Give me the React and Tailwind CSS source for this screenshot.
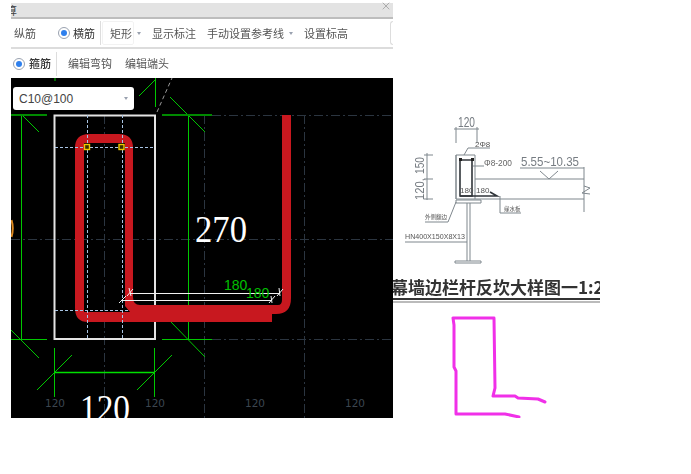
import { X } from 'lucide-react';

const cjk = { fontFamily: '"Noto Sans CJK SC", sans-serif' };

function Radio() {
  return (
    <span className="w-3 h-3 rounded-full border border-gray-400 bg-white flex items-center justify-center shrink-0">
      <span className="w-1.5 h-1.5 rounded-full bg-[#2f80ed]" />
    </span>
  );
}

function Caret() {
  return <span className="block w-0 h-0 border-x-[2px] border-x-transparent border-t-[3px] border-t-gray-400" />;
}

function Canvas() {
  const center = '#2b3540';
  const dash = '#a9c4e4';
  const green = '#00c800';
  return (
    <svg width="382" height="340" viewBox="11 78 382 340" className="block">
      <rect x="11" y="78" width="382" height="340" fill="#000" />

      {/* axis lines */}
      <g stroke={center} strokeWidth="1" strokeDasharray="9 3 2 3" fill="none">
        <path d="M11 239.5H393" />
        <path d="M212 115.5H393" />
        <path d="M212 339.5H393" />
        <path d="M104.5 115V418" />
        <path d="M204.5 115V418" />
        <path d="M304.5 115V418" />
      </g>

      {/* green dimension marks */}
      <g stroke={green} strokeWidth="1" fill="none">
        <path d="M21.5 115V339" />
        <path d="M188.5 115V339" />
        <path d="M22 115L39 132" />
        <path d="M170 97L205 132" />
        <path d="M155.5 78V107" />
        <path d="M139 96L155 80" />
        <path d="M55 78V81" />
        <path d="M11 330L39 358" />
        <path d="M170 321L205 357" />
        <path d="M11 339.5H47" />
        <path d="M162 339.5H212" />
        <path d="M54.5 348V397" />
        <path d="M154.5 348V397" />
        <path d="M54 372.5H155" strokeWidth="1.4" stroke="#00e000" />
        <path d="M37 390L72 355" />
        <path d="M137 390L172 355" />
      </g>
      <path d="M11 115H47M162 115H212" stroke="#008a00" strokeWidth="2" />
      <path d="M157 112L172 78" stroke="#999" strokeWidth="1" strokeDasharray="4 3" />

      {/* section outline */}
      <rect x="54.5" y="115.5" width="100.5" height="223.5" fill="none" stroke="#e4e4e4" strokeWidth="2" />

      {/* rebar */}
      <path
        fillRule="evenodd"
        fill="#c8181f"
        d="M282 115H291V298Q291 314 276 314H272V322H88Q75 322 75 308V148Q75 134 89 134H119Q133 134 133 148V297Q133 305 140 305H278Q282 305 282 300ZM84 143V312H130L125 306V143Z"
      />

      <g stroke={dash} strokeWidth="1" strokeDasharray="3 2" fill="none">
        <path d="M55 147.5H155" />
        <path d="M55 310.5H130" />
        <path d="M87.5 115V339" />
        <path d="M122.5 115V339" />
      </g>
      <rect x="84.5" y="144.5" width="5" height="5" fill="#3a3000" stroke="#f0c800" strokeWidth="1.4" />
      <rect x="119" y="144.5" width="5" height="5" fill="#3a3000" stroke="#f0c800" strokeWidth="1.4" />

      {/* 180 leaders */}
      <g stroke="#f2f2f2" strokeWidth="1" fill="none">
        <path d="M130 293.5H280" />
        <path d="M122 300.5H272" />
        <path d="M127 296L133 289M129 288L131 296" />
        <path d="M119 303L126 296" />
        <path d="M277 296L283 289M279 288L280 296" />
        <path d="M269 303L275 296M271 296L272 303" />
      </g>
      <text x="224" y="290" fill="#00c000" fontSize="14" style={{ fontFamily: '"Liberation Sans", sans-serif' }}>180</text>
      <text x="246" y="298" fill="#00c000" fontSize="14" style={{ fontFamily: '"Liberation Sans", sans-serif' }}>180</text>

      <text x="195" y="242" fill="#fff" fontSize="37" textLength="52" lengthAdjust="spacingAndGlyphs" style={{ fontFamily: '"Liberation Serif", serif' }}>270</text>
      <text x="80" y="421" fill="#fff" fontSize="37" textLength="50" lengthAdjust="spacingAndGlyphs" style={{ fontFamily: '"Liberation Serif", serif' }}>120</text>

      <g fill="#3c4650" fontSize="10.5" style={{ fontFamily: '"DejaVu Sans", sans-serif' }}>
        <text x="45" y="407">120</text>
        <text x="145" y="407">120</text>
        <text x="245" y="407">120</text>
        <text x="345" y="407">120</text>
      </g>

      <path d="M11.5 220Q14 228 11.5 237" stroke="#e08a20" strokeWidth="2" fill="none" />
    </svg>
  );
}

function Detail() {
  const line = '#7f878d';
  return (
    <svg width="207" height="170" viewBox="393 105 207 170" className="block blur-[0.4px]">
      <g stroke={line} strokeWidth="1" fill="none">
        <path d="M456 155H475V199" />
        <path d="M456 155V199" strokeWidth="1.5" />
        <path d="M475 179H584M456 199H584" />
        <path d="M584 167V212" />
        <path d="M584 186L590 188L582 193L590 194" />
        <path d="M456 127V143M477 127V143M454 129H479" />
        <path d="M427 153V200M424 155H433M424 179H433M424 199H433" />
        <path d="M540 171L549 179L558 171M520 168H584" />
        <path d="M500 196V213H521" />
        <path d="M464 155L468 148H490" />
        <path d="M473 166H484" />
        <path d="M456 200H481V203H456Z" />
        <path d="M455 261H481V263H455Z" />
        <path d="M467 203V261M470 203V261" />
        <path d="M456 202L448 222H425" />
        <path d="M405 242H467" />
      </g>
      <g stroke="#30353a" strokeWidth="1.6" fill="none">
        <path d="M460 160H472V196H460Z" />
        <path d="M460 196H497L490 192" />
      </g>
      <rect x="459" y="158" width="3" height="3" fill="#222" />
      <rect x="471" y="158" width="3" height="3" fill="#222" />
      <g fill="#777d83" style={{ fontFamily: '"Liberation Sans", sans-serif' }}>
        <text x="458" y="127" fontSize="14" textLength="17" lengthAdjust="spacingAndGlyphs">120</text>
        <text x="475" y="147" fontSize="8" fill="#555">2Φ8</text>
        <text x="484" y="166" fontSize="9" fill="#666" textLength="28" lengthAdjust="spacingAndGlyphs">Φ8-200</text>
        <text x="521" y="166" fontSize="13" textLength="58" lengthAdjust="spacingAndGlyphs">5.55~10.35</text>
        <text x="460" y="193" fontSize="8" fill="#555">180</text>
        <text x="476" y="193" fontSize="8" fill="#555">180</text>
        <text x="405" y="239" fontSize="8" fill="#555" textLength="60" lengthAdjust="spacingAndGlyphs">HN400X150X8X13</text>
        <text transform="translate(424 174) rotate(-90)" fontSize="13" textLength="17" lengthAdjust="spacingAndGlyphs">150</text>
        <text transform="translate(424 200) rotate(-90)" fontSize="13" textLength="22" lengthAdjust="spacingAndGlyphs">120,</text>
      </g>
      <g fill="#555" fontSize="5.5" style={cjk}>
        <text x="425" y="219">外侧翻边</text>
        <text x="504" y="211">缘水板</text>
      </g>
    </svg>
  );
}

export default function App() {
  return (
    <div className="w-[691px] h-[474px] bg-white flex items-start overflow-hidden" style={cjk}>
      <div className="ml-[11px] w-[382px] pt-[3px] shrink-0">
        <div className="h-[14px] bg-[#e3e3e3] flex items-start justify-between pr-[1px]">
          <span className="w-[6px] h-[14px] overflow-hidden flex items-center">
            <span className="text-[11px] leading-none text-[#444] -ml-[5px]">算</span>
          </span>
          <X className="w-3 h-3 -mt-[3px] text-[#999]" strokeWidth={1.5} />
        </div>
        <div className="h-[2px] bg-[#bdbdbd]" />

        <div className="h-[28px] flex items-center text-[11px] text-[#555] whitespace-nowrap blur-[0.25px]">
          <span className="ml-[3px]">纵筋</span>
          <span className="ml-[22px]"><Radio /></span>
          <span className="ml-[3px] text-[#333]">横筋</span>
          <span className="ml-[5px] w-px h-6 bg-[#ddd]" />
          <span className="ml-[1px] pl-[7px] pr-[1px] h-6 flex items-center border border-[#f2f2f2] rounded-[2px]">矩形</span>
          <span className="ml-[3px]"><Caret /></span>
          <span className="ml-[11px]">显示标注</span>
          <span className="ml-[11px]">手动设置参考线</span>
          <span className="ml-[5px]"><Caret /></span>
          <span className="ml-[11px]">设置标高</span>
          <span className="ml-auto w-[3px] h-6 border border-r-0 border-[#ddd] rounded-l-[3px]" />
        </div>
        <div className="h-[2px] bg-[#dcdcdc]" />

        <div className="h-[29px] flex items-center text-[11px] text-[#555] whitespace-nowrap blur-[0.25px]">
          <span className="ml-[2px]"><Radio /></span>
          <span className="ml-[4px] font-medium text-[#333]">箍筋</span>
          <span className="ml-[5px] w-px h-6 bg-[#ddd]" />
          <span className="ml-[11px]">编辑弯钩</span>
          <span className="ml-[13px]">编辑端头</span>
        </div>

        <div className="relative">
          <Canvas />
          <div className="absolute left-[2px] top-[9px] w-[121px] h-[23px] bg-white rounded-[3px] flex items-center justify-between px-1.5">
            <span className="text-[12px] text-[#444]" style={{ fontFamily: '"Liberation Sans", sans-serif' }}>C10@100</span>
            <Caret />
          </div>
        </div>
      </div>

      <div className="w-[207px] pt-[105px] shrink-0 overflow-hidden">
        <Detail />
        <div className="h-[23px] flex items-center overflow-hidden whitespace-nowrap text-[17px] leading-none font-bold text-[#333] blur-[0.3px]">
          <span className="-ml-[2px]">幕墙边栏杆反坎大样图一1:2</span>
        </div>
        <div className="h-[2px] bg-[#333]" />
        <div className="h-[2px] mt-px bg-[#bbb]" />
        <svg width="207" height="115" viewBox="393 303 207 115" className="block">
          <path
            d="M453 318H494L495 388L493 396H515L518 398L538 399L545 402M453 318L454 325V367L456 371V414L505 414L519 417"
            stroke="#f030e8"
            strokeWidth="3"
            fill="none"
            strokeLinejoin="round"
            strokeLinecap="round"
          />
        </svg>
      </div>
    </div>
  );
}
